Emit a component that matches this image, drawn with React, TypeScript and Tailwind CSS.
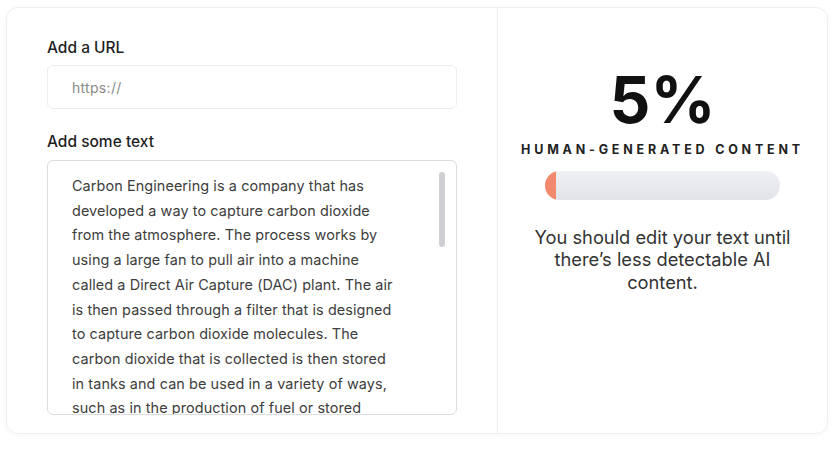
import React from "react";

const lines = [
  "Carbon Engineering is a company that has",
  "developed a way to capture carbon dioxide",
  "from the atmosphere. The process works by",
  "using a large fan to pull air into a machine",
  "called a Direct Air Capture (DAC) plant. The air",
  "is then passed through a filter that is designed",
  "to capture carbon dioxide molecules. The",
  "carbon dioxide that is collected is then stored",
  "in tanks and can be used in a variety of ways,",
  "such as in the production of fuel or stored",
];

function App() {
  return (
    <main className="w-[837px] h-[450px] bg-white font-['Inter',sans-serif] text-[#1f1f1f] overflow-hidden">
      <div className="ml-[6px] mt-[7px] w-[822px] h-[427px] flex border border-[#efefef] rounded-[12px] shadow-[0_1px_4px_rgba(0,0,0,0.04)] overflow-hidden">
        {/* left: inputs */}
        <section className="w-[491px] shrink-0 border-r border-[#ececec] pl-[40px] pt-[30px]">
          <p className="text-[15.5px] font-medium leading-5">Add a URL</p>
          <div className="mt-[7px] w-[410px] h-[44px] border border-[#ececec] rounded-[6px] flex items-center pl-[24px]">
            <span className="text-[14px] text-[#8a8a8a] tracking-[0.3px]">https://</span>
          </div>
          <p className="mt-[23px] text-[15.5px] font-medium leading-5">Add some text</p>
          <div className="relative mt-[8px] w-[410px] h-[255px] border border-[#dcdde3] rounded-[6px] overflow-hidden pl-[24px] pt-[13px]">
            <div className="text-[14.4px] leading-[24.7px] text-[#3d3d3d] tracking-[0.1px]">
              {lines.map((l) => (
                <div key={l} className="whitespace-nowrap">{l}</div>
              ))}
            </div>
            <div className="absolute right-[11px] top-[11px] w-[6px] h-[75px] rounded-full bg-[#cfcfd3]" />
          </div>
        </section>

        {/* right: score */}
        <section className="flex-1 flex flex-col items-center pt-[60px]">
          <p className="text-[64px] font-bold leading-[64px] text-[#111]">5%</p>
          <p className="mt-[9px] text-[12.5px] font-bold tracking-[3.8px] text-[#222]">HUMAN-GENERATED CONTENT</p>
          <div className="mt-[11px] w-[235px] h-[29px] rounded-full bg-gradient-to-b from-[#eef0f3] to-[#e1e3e8] overflow-hidden flex">
            <div className="w-[11px] h-full rounded-l-full bg-[#f3896c]" />
          </div>
          <p className="mt-[26px] w-[270px] text-center text-[18.3px] leading-[22.5px] text-[#333]">
            You should edit your text until there’s less detectable AI content.
          </p>
        </section>
      </div>
    </main>
  );
}

export default App;
